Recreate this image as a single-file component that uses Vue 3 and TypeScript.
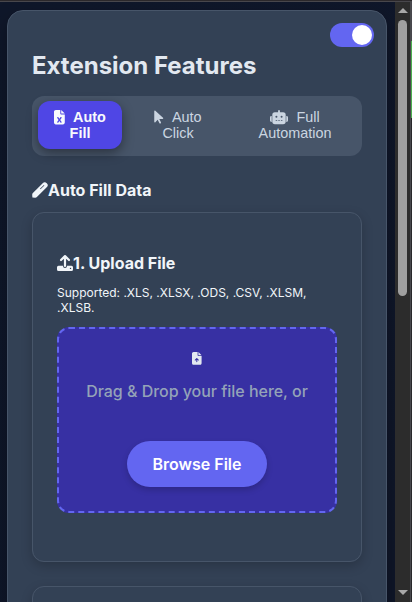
<script setup lang="ts">
import { ref } from 'vue'

type TabId = 'fill' | 'click' | 'full'

const enabled = ref(true)
const activeTab = ref<TabId>('fill')
const tabs: { id: TabId; first: string; second: string }[] = [
  { id: 'fill', first: 'Auto', second: 'Fill' },
  { id: 'click', first: 'Auto', second: 'Click' },
  { id: 'full', first: 'Full', second: 'Automation' },
]
</script>

<template>
  <div class="window">
    <main class="viewport">
      <section class="panel">
        <button class="switch" :class="{ on: enabled }" aria-label="Toggle" @click="enabled = !enabled">
          <span class="knob"></span>
        </button>
        <h1>Extension Features</h1>

        <nav class="tabs">
          <button
            v-for="tab in tabs"
            :key="tab.id"
            class="tab"
            :class="[tab.id, { active: activeTab === tab.id }]"
            @click="activeTab = tab.id"
          >
            <span class="line">
              <svg v-if="tab.id === 'fill'" class="i-file" viewBox="0 0 384 512">
                <path fill-rule="evenodd" d="M64 0C29 0 0 29 0 64v384c0 35 29 64 64 64h256c35 0 64-29 64-64V160H256c-18 0-32-14-32-32V0H64zm192 0v128h128L256 0zM156 257l36 54 36-54c8-11 22-14 33-7s14 22 7 33l-47 69 47 69c7 11 4 26-7 33s-25 4-33-7l-36-54-36 54c-8 11-22 14-33 7s-14-22-7-33l47-69-47-69c-7-11-4-26 7-33s25-4 33 7z" />
              </svg>
              <svg v-else-if="tab.id === 'click'" class="i-cursor" viewBox="0 0 320 512">
                <path d="M0 40v382c0 12 10 22 22 22 7 0 13-3 17-8l82-93 60 118c8 16 27 23 43 15s22-27 14-43L179 320h118c13 0 23-10 23-23 0-6-3-13-8-17L38 24C34 20 29 18 23 18 10 18 0 28 0 40z" />
              </svg>
              <svg v-else class="i-robot" viewBox="0 0 18 14.4">
                <path fill-rule="evenodd" d="M9 0a.9.9 0 0 1 .9.9v1.400h3.200a2.600 2.600 0 0 1 2.600 2.600v6.700a2.600 2.600 0 0 1-2.600 2.600H4.900a2.600 2.600 0 0 1-2.600-2.600V4.900a2.600 2.600 0 0 1 2.600-2.600h3.200V.9A.9.9 0 0 1 9 0zM6.400 5.700a1 1 0 1 0 0 2 1 1 0 0 0 0-2zm5.200 0a1 1 0 1 0 0 2 1 1 0 0 0 0-2zM5.700 10.200v.8h1.500v-.8zm2.600 0v.8h1.500v-.8zm2.600 0v.8h1.500v-.8zM1.700 6v6h-.3A1.400 1.400 0 0 1 0 10.600V7.400A1.400 1.400 0 0 1 1.400 6zm14.600 0h.3A1.400 1.400 0 0 1 18 7.400v3.200a1.400 1.400 0 0 1-1.400 1.400h-.3z" />
              </svg>
              <span>{{ tab.first }}</span>
            </span>
            <span class="line">{{ tab.second }}</span>
          </button>
        </nav>

        <h2 class="section-title">
          <svg class="i-16" viewBox="0 0 16 16">
            <path fill-rule="evenodd" d="M.4 15.6.2 12.9Q.1 11.9.9 11.1L11.2.8Q12.1-.1 13.2.3 15.1.9 15.8 2.8 16 3.9 15.2 4.8L4.9 15.1Q4.1 15.9 3.1 15.8ZM11.900 2.900 8 6.800l.5.5 3.900-3.900z" />
          </svg>
          <span>Auto Fill Data</span>
        </h2>

        <section class="card">
          <h3>
            <svg class="i-16" viewBox="0 0 16 16">
              <path d="M4 5 8 1.100 12 5M8 1.300v9.700" fill="none" stroke="currentColor" stroke-width="2.200" stroke-linecap="round" stroke-linejoin="round" />
              <path fill-rule="evenodd" d="M1.500 10.700H6V11a2 2 0 0 0 4 0v-.3h4.500A1.500 1.500 0 0 1 16 12.200v2.300a1.500 1.500 0 0 1-1.500 1.500h-13A1.500 1.500 0 0 1 0 14.500v-2.300a1.500 1.500 0 0 1 1.500-1.500zm12 2a.7.7 0 1 0 0 1.400.7.7 0 0 0 0-1.400z" />
            </svg>
            <span>1. Upload File</span>
          </h3>
          <p class="hint">Supported: .XLS, .XLSX, .ODS, .CSV, .XLSM, .XLSB.</p>
          <div class="dropzone">
            <svg class="i-drop" viewBox="0 0 384 512">
              <path fill-rule="evenodd" d="M64 0C29 0 0 29 0 64v384c0 35 29 64 64 64h256c35 0 64-29 64-64V160H256c-18 0-32-14-32-32V0H64zm192 0v128h128L256 0zM212 390c0 11-9 20-20 20s-20-9-20-20v-80l-28 28c-9 9-22 9-30 0s-8-21 0-30l62-62c9-9 23-9 32 0l62 62c8 9 8 22 0 30s-21 9-30 0l-28-28v80z" />
            </svg>
            <p>Drag &amp; Drop your file here, or</p>
            <button class="browse">Browse File</button>
          </div>
        </section>
        <section class="card next"></section>
      </section>
    </main>
    <aside class="scrollbar">
      <span class="arrow up"></span>
      <span class="thumb"></span>
      <span class="arrow down"></span>
    </aside>
    <div class="edge"></div>
  </div>
</template>

<style>
html, body { overflow: hidden; background: #0f172a; }
</style>

<style scoped>
* { box-sizing: border-box; }
button { border: 0; padding: 0; margin: 0; }
h1, h2, h3, p { margin: 0; }
svg { display: block; fill: currentColor; flex: none; overflow: visible; }
.window {
  display: grid;
  grid-template-columns: 395px 15px 2px;
  width: 412px;
  height: 602px;
  overflow: hidden;
  border-top: 1px solid #2b282b;
  font-family: Inter, "Liberation Sans", sans-serif;
  color: #f1f5f9;
}
.viewport {
  padding: 8px 8px 0 7px;
  border-top: 1px solid #48474c;
  background: linear-gradient(135deg, #0f172a, #0f1629);
  overflow: hidden;
}
.panel {
  position: relative;
  height: 720px;
  padding: 40px 24px 0;
  background: #334155;
  border: 1px solid #475569;
  border-radius: 16px;
  box-shadow: 0 8px 20px rgba(0, 0, 0, .3);
}
.switch {
  position: absolute;
  top: 12px;
  right: 12px;
  width: 44px;
  height: 24px;
  padding: 2px;
  display: flex;
  border-radius: 12px;
  background: #64748b;
}
.switch.on { background: #6366f1; justify-content: flex-end; }
.knob { width: 20px; height: 20px; border-radius: 50%; background: #fff; }
h1 { font-size: 24px; line-height: 29px; font-weight: 700; color: #e2e8f0; }
.tabs {
  display: grid;
  grid-template-columns: 84px 100px 122px;
  gap: 6px;
  margin-top: 16px;
  height: 60px;
  padding: 5px 6px 7px;
  border-radius: 12px;
  background: #475569;
}
.tab {
  display: flex;
  flex-direction: column;
  align-items: center;
  justify-content: center;
  background: transparent;
  border-radius: 12px;
  color: #cbd5e1;
  font: 14.4px/16px "Liberation Sans", sans-serif;
}
.tab.active {
  background: #4f46e5;
  color: #f8fafc;
  font-weight: 700;
  box-shadow: 0 4px 12px rgba(0, 0, 0, .4);
}
.line { display: flex; align-items: center; gap: 8px; }
.i-file { width: 10.8px; height: 14.4px; }
.i-cursor { width: 9.5px; height: 14.4px; }
.i-robot { width: 18px; height: 14.4px; }
.i-16 { width: 16px; height: 16px; }
.section-title, h3 { display: flex; align-items: center; font-size: 16px; line-height: 20px; font-weight: 700; }
.section-title { margin-top: 24px; }
.card {
  height: 350px;
  margin-top: 12px;
  padding: 40px 24px 0;
  border: 1px solid #475569;
  border-radius: 12px;
  box-shadow: 0 4px 12px rgba(0, 0, 0, .2);
}
.card.next { margin-top: 24px; }
.hint { margin-top: 12px; font-size: 12px; line-height: 15px; color: #f1f5f9; }
.dropzone {
  display: flex;
  flex-direction: column;
  align-items: center;
  height: 186px;
  margin-top: 12px;
  padding-top: 23px;
  border: 2px dashed #6366f1;
  border-radius: 12px;
  background: #3730a3;
}
.i-drop { width: 9.6px; height: 12.8px; color: #e2e8f0; }
.dropzone p { margin-top: 16px; font-size: 16px; line-height: 20px; font-weight: 500; letter-spacing: -.03px; color: #94a3b8; white-space: nowrap; }
.browse {
  width: 140px;
  height: 46px;
  margin-top: 40px;
  border-radius: 23px;
  background: #6366f1;
  color: #fff;
  font: 600 16px/20px Inter, "Liberation Sans", sans-serif;
  box-shadow: 0 3px 6px rgba(0, 0, 0, .18);
}
.scrollbar {
  display: flex;
  flex-direction: column;
  align-items: center;
  padding: 6px 0 7px;
  border-top: 1px solid #48474c;
  background: #2c2c2c;
}
.thumb { width: 9px; height: 276px; margin-top: 7px; border-radius: 5px; background: #9f9f9f; }
.arrow { width: 0; height: 0; border: 4.5px solid transparent; border-left-width: 5px; border-right-width: 5px; }
.up { border-top: 0; border-bottom: 5px solid #a8a8a8; }
.down { margin-top: auto; border-bottom: 0; border-top: 5px solid #a8a8a8; }
.edge {
  border-left: 1px solid #49494d;
  background: linear-gradient(#48474c 0 40px, #4caf50 40px 117px, #29292b 117px);
}
</style>
